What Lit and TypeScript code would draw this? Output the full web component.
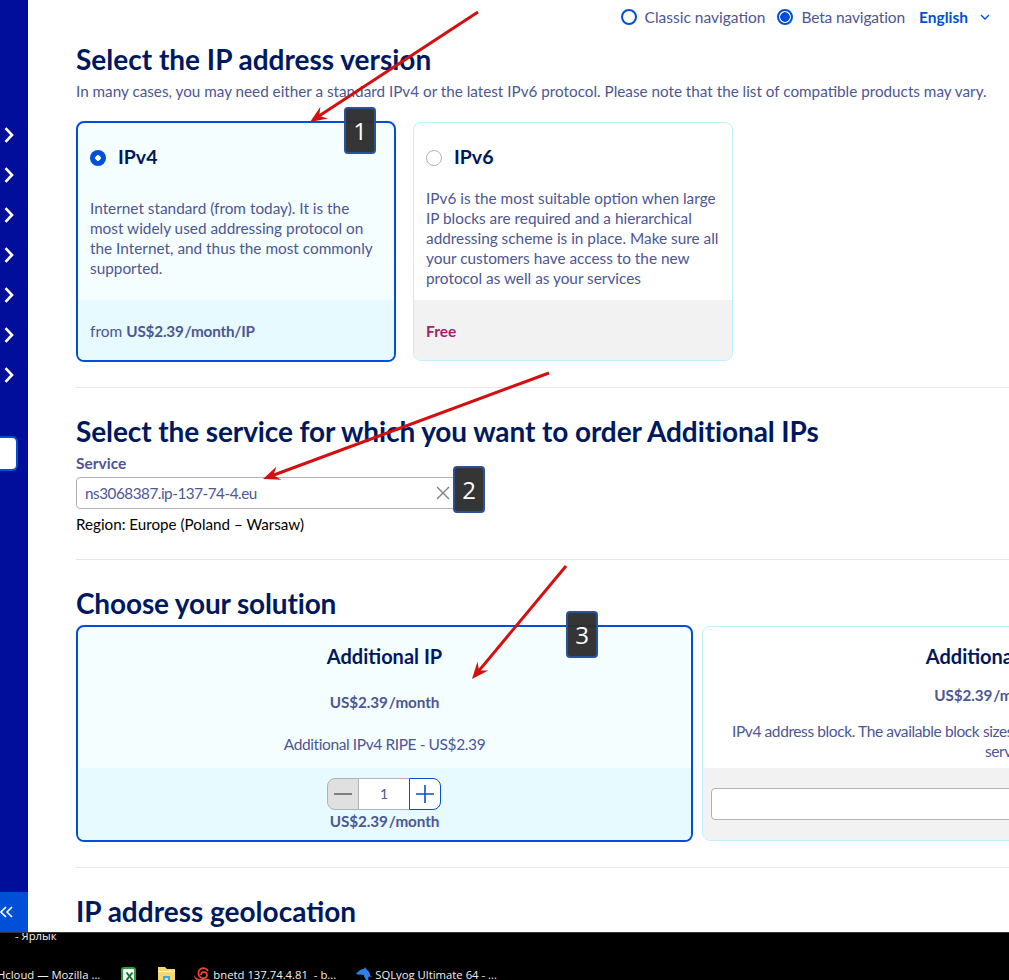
import { LitElement, html, css, svg } from "lit";
import { customElement } from "lit/decorators.js";

const chevron = html`<svg class="chev" width="10" height="16" viewBox="0 0 10 16"><path d="M1.5 1.2 8 8l-6.5 6.8" fill="none" stroke="#fff" stroke-width="2.6"/></svg>`;

function arrow(x1: number, y1: number, x2: number, y2: number) {
  const a = Math.atan2(y2 - y1, x2 - x1);
  const p = (d: number, o: number) => {
    const x = x2 - d * Math.cos(a) - o * Math.sin(a);
    const y = y2 - d * Math.sin(a) + o * Math.cos(a);
    return `${x.toFixed(1)},${y.toFixed(1)}`;
  };
  return svg`<line x1=${x1} y1=${y1} x2=${x2 - 8 * Math.cos(a)} y2=${y2 - 8 * Math.sin(a)} stroke="#d40f0f" stroke-width="3"/>
    <polygon points="${x2},${y2} ${p(17, 7)} ${p(11, 0)} ${p(17, -7)}" fill="#d40f0f"/>`;
}

@customElement("app-root")
export class AppRoot extends LitElement {
  static styles = css`
    :host { display: block; position: relative; width: 1009px; height: 980px; overflow: hidden; background: #fff;
      font-family: "Lato", "Noto Sans", sans-serif; font-size: 15.5px; line-height: 20px; color: #4d5693; }
    * { box-sizing: border-box; }
    .page { display: flex; height: 932px; overflow: hidden; }
    .side { width: 28px; flex: none; background: #000e9c; display: flex; flex-direction: column; }
    .chevs { display: flex; flex-direction: column; padding: 115px 0 0 4px; }
    .chevs div { height: 40px; display: flex; align-items: center; }
    .tab { margin-top: 41px; width: 18px; height: 35px; background: #fff; border: 2px solid #0050d7; border-left: 0; border-radius: 0 6px 6px 0; }
    .collapse { margin-top: auto; height: 40px; background: #0050d7; color: #fff; display: flex; align-items: center; }
    .main { flex: 1; min-width: 0; padding-left: 48px; overflow: hidden; }
    .nav { height: 34px; display: flex; justify-content: flex-end; align-items: center; padding-right: 19px; }
    .nav .item { display: flex; align-items: center; gap: 8px; margin-right: 12px; }
    .nav .beta { letter-spacing: -0.13px; }
    .ring { width: 16px; height: 16px; border-radius: 50%; border: 2.5px solid #0050d7; flex: none; background: #fff; }
    .ring.on { background: radial-gradient(circle, #0050d7 0 4.5px, #fff 5px); }
    .lang { color: #0050d7; font-weight: 700; display: flex; align-items: center; gap: 12px; margin-left: 2px; }
    h2 { margin: 25px 0 1px; font-size: 28px; line-height: 36px; font-weight: 700; color: #00185e; white-space: nowrap; }
    h2.first { margin-top: 7px; }
    h2.service { letter-spacing: -0.1px; }
    h2.choose { letter-spacing: -0.15px; }
    .sub { margin-top: 4px; white-space: nowrap; font-size: 15.25px; }
    .row { display: flex; align-items: flex-start; }
    .ver { margin-top: 21px; gap: 17px; }
    .card { flex: none; border: 1px solid #bef1ff; border-radius: 8px; background: #fff; display: flex; flex-direction: column; overflow: hidden; }
    .card.sel { border: 2px solid #0050d7; background: #f5feff; margin-top: -1px; margin-bottom: -1px; }
    .v { width: 320px; height: 239px; }
    .sel.v { height: 241px; }
    .v .body { flex: 1; padding: 0 12px; }
    .head { height: 65px; padding-top: 4px; display: flex; align-items: center; gap: 12px; font-size: 19.5px; font-weight: 700; color: #00185e; }
    .head span.lbl { padding-bottom: 2px; }
    .dot { width: 16px; height: 16px; border-radius: 50%; flex: none; border: 1px solid #b3b3b3; background: #fff; }
    .dot.on { border: 0; background: radial-gradient(circle, #fff 0 2.5px, #0050d7 3px); }
    .text { font-size: 15.35px; white-space: nowrap; }
    .text.low { padding-top: 10px; }
    .foot { background: #f2f2f2; }
    .sel .foot { background: #e6faff; }
    .v .foot { height: 60px; flex: none; padding: 1px 12px 0; display: flex; align-items: center; gap: 4px; }
    b { font-weight: 700; word-spacing: -2.5px; font-size: 15.25px; letter-spacing: -0.2px; }
    .free { font-weight: 700; color: #ad1a6e; font-size: 15.5px; }
    hr { margin: 26px 0 0; border: 0; border-top: 1px solid #e6e6e6; }
    .label { margin-top: 4px; font-weight: 700; }
    .input { margin-top: 4px; width: 383px; height: 32px; border: 1px solid #b3b3b3; border-radius: 4px; background: #fff; display: flex; align-items: center; justify-content: space-between; padding: 0 8px 0 8px; }
    .input span { letter-spacing: -0.47px; font-size: 15.25px; }
    .region { margin-top: 5px; margin-bottom: 25px; color: #000; font-size: 15.2px; }
    .region + hr { margin-top: 0; }
    .sols { margin-top: 5px; gap: 9px; }
    .s { width: 617px; height: 215px; text-align: center; }
    .sel.s { height: 217px; }
    .s .body { height: 141px; flex: none; }
    .title { font-size: 20px; font-weight: 700; color: #00185e; line-height: 24px; margin-top: 17px; }
    .price { font-weight: 700; word-spacing: -2.5px; font-size: 15.25px; letter-spacing: -0.1px; }
    .sel.s .price { margin-top: 24px; }
    .desc { letter-spacing: -0.4px; }
    .sel.s .desc { margin-top: 22px; }
    .card:not(.sel).s .price { margin-top: 17px; }
    .card:not(.sel).s .desc { margin-top: 16px; white-space: nowrap; }
    .s .foot { flex: 1; display: flex; flex-direction: column; align-items: center; }
    .stepper { margin: 10px 1px 0 0; display: flex; height: 32px; width: 114px; }
    .stepper .minus { width: 32px; background: #e0e0e0; border: 1px solid #b3b3b3; border-radius: 8px 0 0 8px; display: flex; align-items: center; justify-content: center; }
    .stepper .val { width: 50px; background: #fff; border-top: 1px solid #b3b3b3; border-bottom: 1px solid #b3b3b3; display: flex; align-items: center; justify-content: center; font-size: 14px; }
    .stepper .plus { width: 32px; background: #fff; border: 1px solid #0050d7; border-radius: 0 8px 8px 0; display: flex; align-items: center; justify-content: center; }
    .total { font-weight: 700; line-height: 20px; margin-top: 1px; word-spacing: -2.5px; font-size: 15.25px; letter-spacing: -0.1px; }
    .blank { margin: 20px 8px 0; align-self: stretch; height: 32px; background: #fff; border: 1px solid #b3b3b3; border-radius: 4px; }
    .task { position: relative; height: 48px; background: #000; border-top: 1px solid #333; color: #f0f0f0; font-family: "Open Sans", "Noto Sans", sans-serif; font-size: 11.3px; line-height: 16px; overflow: hidden; }
    .shortcut { position: absolute; left: 15px; top: -5px; }
    .tasks { position: absolute; top: 34px; left: -3px; display: flex; align-items: flex-start; white-space: nowrap; }
    .i-excel { margin-left: 21px; }
    .i-folder { margin-left: 21px; }
    .i-snail { margin-left: 19px; }
    .i-dolphin { margin-left: 20px; }
    .t { margin-left: 3px; }
    .over { position: absolute; left: 0; top: 0; width: 1009px; height: 932px; pointer-events: none; }
    .arrows { position: absolute; left: 0; top: 0; }
    .badge { position: absolute; width: 32px; height: 47px; background: rgba(46,46,46,.97); border: 2px solid #2a5298; border-radius: 4px; color: #fff; font-size: 24px; font-weight: 500; display: flex; align-items: center; justify-content: center; font-family: "Open Sans", sans-serif; }
    .b1 { left: 344px; top: 107px; }
    .b2 { left: 453px; top: 466px; }
    .b3 { left: 566px; top: 611px; }
  `;

  render() {
    return html`
      <div class="page">
        <aside class="side">
          <div class="chevs">${Array.from({ length: 7 }, () => html`<div>${chevron}</div>`)}</div>
          <div class="tab"></div>
          <div class="collapse"><svg width="14" height="12" viewBox="0 0 14 12"><path d="M6 1 1 6l5 5M12 1 7 6l5 5" fill="none" stroke="#fff" stroke-width="1.6"/></svg></div>
        </aside>
        <main class="main">
          <div class="nav">
            <div class="item"><span class="ring"></span>Classic navigation</div>
            <div class="item beta"><span class="ring on"></span>Beta navigation</div>
            <div class="lang">English <svg width="10" height="6" viewBox="0 0 10 6"><path d="M1 1l4 4 4-4" fill="none" stroke="#0050d7" stroke-width="1.4"/></svg></div>
          </div>
          <h2 class="first">Select the IP address version</h2>
          <div class="sub">In many cases, you may need either a standard IPv4 or the latest IPv6 protocol. Please note that the list of compatible products may vary.</div>
          <div class="row ver">
            <div class="card v sel">
              <div class="body">
                <div class="head"><span class="dot on"></span><span class="lbl">IPv4</span></div>
                <div class="text low">Internet standard (from today). It is the<br />most widely used addressing protocol on<br />the Internet, and thus the most commonly<br />supported.</div>
              </div>
              <div class="foot">from <b>US$2.39 /month/IP</b></div>
            </div>
            <div class="card v">
              <div class="body">
                <div class="head"><span class="dot"></span><span class="lbl">IPv6</span></div>
                <div class="text">IPv6 is the most suitable option when large<br />IP blocks are required and a hierarchical<br />addressing scheme is in place. Make sure all<br />your customers have access to the new<br />protocol as well as your services</div>
              </div>
              <div class="foot"><span class="free">Free</span></div>
            </div>
          </div>
          <hr />
          <h2 class="service">Select the service for which you want to order Additional IPs</h2>
          <div class="label">Service</div>
          <div class="input"><span>ns3068387.ip-137-74-4.eu</span><svg width="14" height="14" viewBox="0 0 14 14"><path d="M1 1l12 12M13 1 1 13" fill="none" stroke="#808080" stroke-width="1.4"/></svg></div>
          <div class="region">Region: Europe (Poland – Warsaw)</div>
          <hr />
          <h2 class="choose">Choose your solution</h2>
          <div class="row sols">
            <div class="card s sel">
              <div class="body">
                <div class="title">Additional IP</div>
                <div class="price">US$2.39 /month</div>
                <div class="desc">Additional IPv4 RIPE - US$2.39</div>
              </div>
              <div class="foot">
                <div class="stepper">
                  <div class="minus"><svg width="18" height="2" viewBox="0 0 18 2"><rect width="18" height="2" fill="#808080"/></svg></div>
                  <div class="val">1</div>
                  <div class="plus"><svg width="18" height="18" viewBox="0 0 18 18"><path d="M9 0v18M0 9h18" stroke="#0050d7" stroke-width="1.6"/></svg></div>
                </div>
                <div class="total">US$2.39 /month</div>
              </div>
            </div>
            <div class="card s">
              <div class="body">
                <div class="title">Additional IP Block</div>
                <div class="price">US$2.39 /month/block</div>
                <div class="desc">IPv4 address block. The available block sizes and prices depend on the model of all your<br />services</div>
              </div>
              <div class="foot"><div class="blank"></div></div>
            </div>
          </div>
          <hr />
          <h2>IP address geolocation</h2>
        </main>
      </div>
      <footer class="task">
        <div class="shortcut">- Ярлык</div>
        <div class="tasks">
          <span>Hcloud — Mozilla ...</span>
          <svg class="i-excel" width="16" height="16" viewBox="0 0 16 16"><rect x="1" y="1" width="13" height="14" rx="2" fill="#f4fbf4" stroke="#2e9b45" stroke-width="2"/><path d="M5.5 5.5l6 7.500M11.500 5.500l-6 7.500" stroke="#1d6f2f" stroke-width="2"/></svg>
          <svg class="i-folder" width="17" height="16" viewBox="0 0 17 16"><path d="M0 0h7l2 2h8v14H0z" fill="#f7d774"/><rect y="4" width="17" height="1" fill="#fff3c4"/><rect x="5" y="9" width="7" height="7" fill="#3fa9e0"/><rect x="7" y="11" width="3" height="3" fill="#f7d774"/></svg>
          <svg class="i-snail" width="16" height="16" viewBox="0 0 16 16"><path d="M6 7a3 3 0 1 1 3.500 3A5 5 0 1 1 13 3" fill="none" stroke="#e8452c" stroke-width="1.8" transform="translate(1 1)"/><path d="M0 8c0 4 3 6 6 6h6c2 0 3-1 4-2H6C3 12 1 10 0 8z" fill="#e8452c"/></svg>
          <span class="t">bnetd 137.74.4.81&nbsp; - b...</span>
          <svg class="i-dolphin" width="16" height="14" viewBox="0 0 16 14"><path d="M0 7c2-3 5-5 8-5l1-2 2 3c2 1 3 3 3 5l2 2-3-.5c-1 1-1 3 0 4.500-3-.5-5-3-5-6-3-.5-5 0-8-1z" fill="#2f80e8"/></svg>
          <span class="t">SQLyog Ultimate 64 - ...</span>
        </div>
      </footer>
      <div class="over">
        <svg class="arrows" width="1009" height="932">
          ${arrow(478, 12, 310, 122)}
          ${arrow(549, 373, 263, 479)}
          ${arrow(566, 566, 472, 679)}
        </svg>
        <div class="badge b1">1</div>
        <div class="badge b2">2</div>
        <div class="badge b3">3</div>
      </div>
    `;
  }
}
